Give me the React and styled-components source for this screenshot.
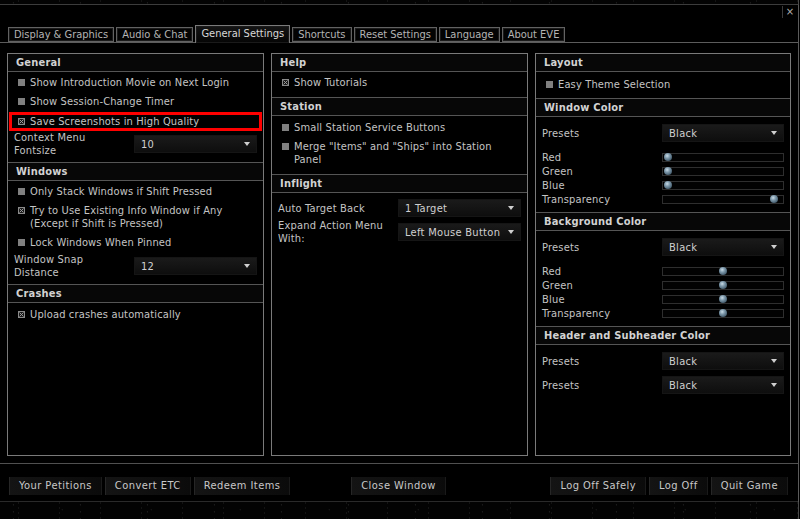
import React from "react";
import styled, { createGlobalStyle, css } from "styled-components";

const GlobalStyle = createGlobalStyle`
  html, body {
    margin: 0;
    padding: 0;
    background: #000;
  }
  body {
    font-family: "DejaVu Sans Condensed", "DejaVu Sans", sans-serif;
    font-size: 11px;
    color: #c4c4c4;
  }
`;

const stars = css`
  background-color: #030303;
  background-image:
    radial-gradient(circle at 20% 40%, #1a1a1a 0.5px, transparent 1px),
    radial-gradient(circle at 70% 70%, #141414 0.5px, transparent 1px),
    radial-gradient(circle at 45% 20%, #171717 0.4px, transparent 0.9px);
  background-size: 67px 7px, 89px 11px, 41px 5px;
`;

const Screen = styled.div`
  width: 800px;
  height: 519px;
  display: flex;
  flex-direction: column;
  overflow: hidden;
  background: #000;
`;

const Starfield = styled.div`
  ${stars};
  height: ${(p) => p.h}px;
  flex: none;
  border-right: 1px solid #4a4a4a;
  width: 798px;
`;

const Window = styled.div`
  width: 798px;
  border-right: 1px solid #5a5a5a;
  border-top: 1px solid #3c3c3c;
  background: #000;
  display: flex;
  flex-direction: column;
`;

const TitleBar = styled.div`
  height: 20px;
  display: flex;
  justify-content: flex-end;
  align-items: flex-start;
`;

const CloseBox = styled.div`
  width: 14px;
  height: 12px;
  border-left: 1px solid #3a3a3a;
  color: #b0b0b0;
  font-family: "DejaVu Sans", sans-serif;
  font-size: 10px;
  line-height: 12px;
  text-align: center;
  margin-right: 1px;
  margin-top: 1px;
`;

const TabBar = styled.div`
  height: 17px;
  display: flex;
  align-items: flex-end;
  gap: 2px;
  padding-left: 8px;
  border-bottom: 1px solid #5c5c5c;
`;

const Tab = styled.div`
  height: ${(p) => (p.active ? 17 : 13)}px;
  line-height: ${(p) => (p.active ? 16 : 13)}px;
  padding: 0 5px;
  border: 1px solid ${(p) => (p.active ? "#7a7a7a" : "#626262")};
  border-bottom: ${(p) => (p.active ? "none" : "1px solid #626262")};
  margin-bottom: ${(p) => (p.active ? -1 : 0)}px;
  box-shadow: inset 0 0 0 1px #1a1a1a;
  background: ${(p) => (p.active ? "linear-gradient(#141414, #050505)" : "#030303")};
  color: ${(p) => (p.active ? "#d8d8d8" : "#b4b4b4")};
  letter-spacing: 0;
  white-space: nowrap;
`;

const Content = styled.div`
  display: grid;
  grid-template-columns: 257px 257px 256px;
  column-gap: 7px;
  padding: 10px 7px 7px 7px;
`;

const Panel = styled.div`
  height: 401px;
  border: 1px solid #7a7a7a;
  display: flex;
  flex-direction: column;
`;

const Section = styled.div`
  border-top: ${(p) => (p.first ? "none" : "1px solid #555")};
  padding-bottom: ${(p) => p.pb ?? 5}px;
`;

const SectionHeader = styled.div`
  height: 17px;
  line-height: 17px;
  padding-left: 8px;
  border-bottom: 1px solid #555;
  background: #070707;
  font-weight: bold;
  color: #d2d2d2;
  letter-spacing: 0.2px;
`;

const SectionBody = styled.div`
  padding-top: ${(p) => p.pt ?? 1}px;
  display: flex;
  flex-direction: column;
  gap: ${(p) => p.gap ?? 0}px;
`;

const CheckRow = styled.div`
  display: flex;
  align-items: flex-start;
  gap: 5px;
  padding: 3px 6px 3px 9px;
  line-height: 13px;
  letter-spacing: 0.15px;
  margin: 0 1px;
  ${(p) =>
    p.highlight &&
    css`
      box-shadow: inset 0 0 0 3px #ff0000;
      margin: 1px 1px -1px 1px;
    `}
`;

const BoxWrap = styled.span`
  flex: none;
  width: 7px;
  height: 7px;
  margin-top: 3px;
  display: block;

  svg {
    display: block;
  }
`;

const Label = styled.span`
  color: #c4c4c4;
`;

const FieldRow = styled.div`
  display: grid;
  grid-template-columns: 120px 1fr;
  align-items: center;
  padding: 0 6px;
  min-height: ${(p) => p.h ?? 18}px;
  line-height: 13px;
  letter-spacing: 0.2px;
  margin-top: ${(p) => p.mt ?? 0}px;
`;

const Select = styled.div`
  height: 18px;
  display: flex;
  align-items: center;
  justify-content: space-between;
  padding: 0 7px 0 7px;
  background: linear-gradient(#1b1b1b, #0d0d0d);
  box-shadow: inset 0 0 0 1px #151515;
  color: #d0d0d0;
  letter-spacing: 0.3px;
  white-space: nowrap;
`;

const Arrow = styled.span`
  width: 0;
  height: 0;
  border-left: 3.5px solid transparent;
  border-right: 3.5px solid transparent;
  border-top: 4px solid #cfcfcf;
`;

const SliderRow = styled.div`
  display: grid;
  grid-template-columns: 120px 1fr;
  align-items: center;
  padding: 0 6px;
  height: 14px;
  line-height: 14px;
  letter-spacing: 0.2px;
`;

const Track = styled.div`
  position: relative;
  height: 7px;
  border: 1px solid #2e2e2e;
  background: #020202;
  margin-top: -1px;
`;

const Knob = styled.span`
  position: absolute;
  top: -1px;
  width: 8px;
  height: 8px;
  margin-left: -4px;
  border-radius: 50%;
  background: radial-gradient(circle at 40% 35%, #c9dbe6 0, #7d98aa 35%, #3d5566 80%);
`;

const SliderGroup = styled.div`
  margin-top: 9px;
  display: flex;
  flex-direction: column;
`;

const Footer = styled.div`
  border-top: 1px solid #505050;
  border-bottom: 1px solid #2a2a2a;
  padding: 13px 10px 6px 9px;
  display: grid;
  grid-template-columns: 1fr auto 1fr;
  align-items: center;
`;

const ButtonGroup = styled.div`
  display: flex;
  gap: 3px;
  justify-self: ${(p) => p.align};
`;

const Button = styled.div`
  height: 18px;
  line-height: 18px;
  padding: 0 9px;
  background: linear-gradient(90deg, #141414, #0b0b0b);
  border-left: 1px solid #262626;
  border-right: 1px solid #1a1a1a;
  color: #c8c8c8;
  letter-spacing: 0.45px;
  white-space: nowrap;
`;

function CheckBox({ checked }) {
  return (
    <BoxWrap>
      <svg width="7" height="7" viewBox="0 0 7 7">
        {checked ? (
          <>
            <rect x="0.5" y="0.5" width="6" height="6" fill="#1a1a1a" stroke="#8a8a8a" />
            <path d="M1.5 1.5 L5.5 5.5 M5.5 1.5 L1.5 5.5" stroke="#9a9a9a" strokeWidth="1" />
          </>
        ) : (
          <rect x="0" y="0" width="7" height="7" fill="#808080" />
        )}
      </svg>
    </BoxWrap>
  );
}

function Check({ checked, highlight, children }) {
  return (
    <CheckRow highlight={highlight}>
      <CheckBox checked={checked} />
      <Label>{children}</Label>
    </CheckRow>
  );
}

function Dropdown({ value }) {
  return (
    <Select>
      <span>{value}</span>
      <Arrow />
    </Select>
  );
}

function Slider({ label, value }) {
  return (
    <SliderRow>
      <Label>{label}</Label>
      <Track>
        <Knob style={{ left: `calc(5px + ${value} * (100% - 10px))` }} />
      </Track>
    </SliderRow>
  );
}

const tabs = [
  "Display & Graphics",
  "Audio & Chat",
  "General Settings",
  "Shortcuts",
  "Reset Settings",
  "Language",
  "About EVE",
];

export default function App() {
  return (
    <Screen>
      <GlobalStyle />
      <Starfield h={4} />
      <Window>
        <TitleBar>
          <CloseBox>×</CloseBox>
        </TitleBar>
        <TabBar>
          {tabs.map((t) => (
            <Tab key={t} active={t === "General Settings"}>
              {t}
            </Tab>
          ))}
        </TabBar>

        <Content>
          <Panel>
            <Section first>
              <SectionHeader>General</SectionHeader>
              <SectionBody>
                <Check>Show Introduction Movie on Next Login</Check>
                <Check>Show Session-Change Timer</Check>
                <Check checked highlight>
                  Save Screenshots in High Quality
                </Check>
                <FieldRow h={26} mt={1}>
                  <Label>
                    Context Menu
                    <br />
                    Fontsize
                  </Label>
                  <Dropdown value="10" />
                </FieldRow>
              </SectionBody>
            </Section>
            <Section>
              <SectionHeader>Windows</SectionHeader>
              <SectionBody>
                <Check>Only Stack Windows if Shift Pressed</Check>
                <Check checked>
                  Try to Use Existing Info Window if Any
                  <br />
                  (Except if Shift is Pressed)
                </Check>
                <Check>Lock Windows When Pinned</Check>
                <FieldRow h={26} mt={1}>
                  <Label>
                    Window Snap
                    <br />
                    Distance
                  </Label>
                  <Dropdown value="12" />
                </FieldRow>
              </SectionBody>
            </Section>
            <Section pb={0}>
              <SectionHeader>Crashes</SectionHeader>
              <SectionBody pt={2}>
                <Check checked>Upload crashes automatically</Check>
              </SectionBody>
            </Section>
          </Panel>

          <Panel>
            <Section first>
              <SectionHeader>Help</SectionHeader>
              <SectionBody>
                <Check checked>Show Tutorials</Check>
              </SectionBody>
            </Section>
            <Section>
              <SectionHeader>Station</SectionHeader>
              <SectionBody pt={2}>
                <Check>Small Station Service Buttons</Check>
                <Check>
                  Merge "Items" and "Ships" into Station
                  <br />
                  Panel
                </Check>
              </SectionBody>
            </Section>
            <Section pb={0}>
              <SectionHeader>Inflight</SectionHeader>
              <SectionBody pt={6}>
                <FieldRow h={18}>
                  <Label>Auto Target Back</Label>
                  <Dropdown value="1 Target" />
                </FieldRow>
                <FieldRow h={26} mt={2}>
                  <Label>
                    Expand Action Menu
                    <br />
                    With:
                  </Label>
                  <Dropdown value="Left Mouse Button" />
                </FieldRow>
              </SectionBody>
            </Section>
          </Panel>

          <Panel>
            <Section first pb={4}>
              <SectionHeader>Layout</SectionHeader>
              <SectionBody pt={3}>
                <Check>Easy Theme Selection</Check>
              </SectionBody>
            </Section>
            <Section>
              <SectionHeader>Window Color</SectionHeader>
              <SectionBody pt={7}>
                <FieldRow h={18}>
                  <Label>Presets</Label>
                  <Dropdown value="Black" />
                </FieldRow>
                <SliderGroup>
                  <Slider label="Red" value={0} />
                  <Slider label="Green" value={0} />
                  <Slider label="Blue" value={0} />
                  <Slider label="Transparency" value={0.96} />
                </SliderGroup>
              </SectionBody>
            </Section>
            <Section>
              <SectionHeader>Background Color</SectionHeader>
              <SectionBody pt={7}>
                <FieldRow h={18}>
                  <Label>Presets</Label>
                  <Dropdown value="Black" />
                </FieldRow>
                <SliderGroup>
                  <Slider label="Red" value={0.5} />
                  <Slider label="Green" value={0.5} />
                  <Slider label="Blue" value={0.5} />
                  <Slider label="Transparency" value={0.5} />
                </SliderGroup>
              </SectionBody>
            </Section>
            <Section pb={0}>
              <SectionHeader>Header and Subheader Color</SectionHeader>
              <SectionBody pt={7} gap={6}>
                <FieldRow h={18}>
                  <Label>Presets</Label>
                  <Dropdown value="Black" />
                </FieldRow>
                <FieldRow h={18}>
                  <Label>Presets</Label>
                  <Dropdown value="Black" />
                </FieldRow>
              </SectionBody>
            </Section>
          </Panel>
        </Content>

        <Footer>
          <ButtonGroup align="start">
            <Button>Your Petitions</Button>
            <Button>Convert ETC</Button>
            <Button>Redeem Items</Button>
          </ButtonGroup>
          <ButtonGroup align="center">
            <Button>Close Window</Button>
          </ButtonGroup>
          <ButtonGroup align="end">
            <Button>Log Off Safely</Button>
            <Button>Log Off</Button>
            <Button>Quit Game</Button>
          </ButtonGroup>
        </Footer>
      </Window>
      <Starfield h={20} />
    </Screen>
  );
}
